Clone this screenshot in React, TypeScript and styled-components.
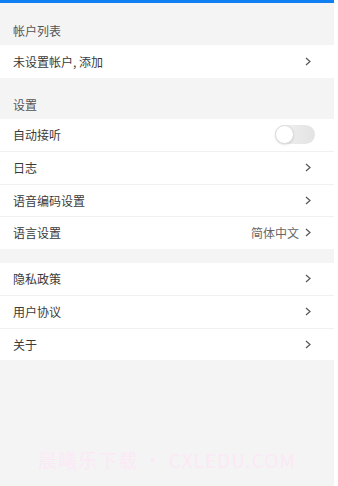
import React, { useState } from 'react';
import styled, { createGlobalStyle } from 'styled-components';

const GlobalStyle = createGlobalStyle`
  html, body {
    margin: 0;
    padding: 0;
    background: #ffffff;
  }
  body {
    font-family: "Noto Sans CJK SC", "Liberation Sans", sans-serif;
  }
`;

const Page = styled.div`
  width: 334px;
  min-height: 486px;
  background: #f4f4f4;
  display: flex;
  flex-direction: column;
`;

const TopBar = styled.div`
  height: 3px;
  background: #0f7ff2;
`;

const SectionTitle = styled.div<{ $h?: number }>`
  height: ${(p) => p.$h ?? 42}px;
  box-sizing: border-box;
  display: flex;
  align-items: flex-end;
  padding: 0 13px 7px;
  font-size: 12px;
  line-height: 14px;
  color: #555;
`;

const Spacer = styled.div`
  height: 14px;
`;

const Group = styled.div`
  background: #fff;
  display: flex;
  flex-direction: column;
`;

const Row = styled.div`
  height: 32.5px;
  box-sizing: border-box;
  display: flex;
  align-items: center;
  padding: 0 23px 0 13px;
  font-size: 12px;
  color: #3a3a3a;
  & + & {
    border-top: 1px solid #f0f0f0;
  }
`;

const Label = styled.span`
  flex: 1;
`;

const Value = styled.span`
  color: #666;
  margin-right: 6px;
`;

const Track = styled.div<{ $on: boolean }>`
  width: 40px;
  height: 19px;
  border-radius: 10px;
  background: ${(p) => (p.$on ? '#0f7ff2' : 'linear-gradient(90deg, #f2f2f2, #e3e3e3)')};
  position: relative;
  margin-right: -4px;
  cursor: pointer;
`;

const Knob = styled.div<{ $on: boolean }>`
  position: absolute;
  top: 0;
  left: ${(p) => (p.$on ? '21px' : '0')};
  width: 19px;
  height: 19px;
  box-sizing: border-box;
  border-radius: 50%;
  background: #fff;
  border: 1px solid #dcdcdc;
  box-shadow: 0 1px 2px rgba(0, 0, 0, 0.12);
`;

const Watermark = styled.div`
  margin-top: auto;
  padding-bottom: 13px;
  text-align: center;
  font-size: 19px;
  color: #fbe9f6;
  letter-spacing: 1px;
`;

const Chevron = () => (
  <svg width="6" height="9" viewBox="0 0 6 9">
    <path d="M1 1 L5 4.5 L1 8" fill="none" stroke="#555" strokeWidth="1.2" />
  </svg>
);

const App: React.FC = () => {
  const [autoAnswer, setAutoAnswer] = useState(false);

  return (
    <Page>
      <GlobalStyle />
      <TopBar />
      <SectionTitle>帐户列表</SectionTitle>
      <Group>
        <Row>
          <Label>未设置帐户, 添加</Label>
          <Chevron />
        </Row>
      </Group>
      <SectionTitle $h={41}>设置</SectionTitle>
      <Group>
        <Row>
          <Label>自动接听</Label>
          <Track $on={autoAnswer} onClick={() => setAutoAnswer(!autoAnswer)}>
            <Knob $on={autoAnswer} />
          </Track>
        </Row>
        <Row>
          <Label>日志</Label>
          <Chevron />
        </Row>
        <Row>
          <Label>语音编码设置</Label>
          <Chevron />
        </Row>
        <Row>
          <Label>语言设置</Label>
          <Value>简体中文</Value>
          <Chevron />
        </Row>
      </Group>
      <Spacer />
      <Group>
        <Row>
          <Label>隐私政策</Label>
          <Chevron />
        </Row>
        <Row>
          <Label>用户协议</Label>
          <Chevron />
        </Row>
        <Row>
          <Label>关于</Label>
          <Chevron />
        </Row>
      </Group>
      <Watermark>晨曦乐下载 · CXLEDU.COM</Watermark>
    </Page>
  );
};

export default App;
